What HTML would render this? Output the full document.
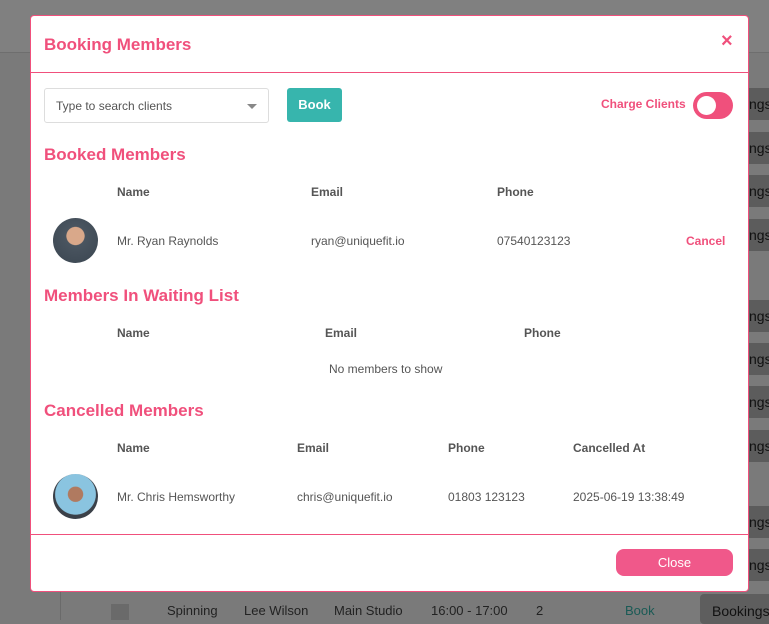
<!DOCTYPE html>
<html><head><style>
*{box-sizing:border-box;margin:0;padding:0}
body{width:769px;height:620px;background:#7a7a7a;font-family:"Liberation Sans",sans-serif;position:relative;overflow:hidden;color:#555}
.topbar{position:absolute;left:0;top:0;width:769px;height:53px;background:#808080;border-bottom:1px solid #6e6e6e}
.bgbtn{position:absolute;left:749px;width:30px;height:32px;background:#5c5c5c;color:#111;font-size:14px;line-height:32px;padding-left:0}
.bgrow{position:absolute;top:603px;font-size:13px;color:#222}
.modal{position:absolute;left:30px;top:15px;width:719px;height:577px;background:#fff;border:1px solid #f0507c;border-radius:4px}
.abs{position:absolute}
h2{position:absolute;font-size:17px;font-weight:bold;color:#f0507c}
.th{position:absolute;font-size:12px;font-weight:bold;color:#555}
.td{position:absolute;font-size:12px;color:#555}
.av{position:absolute;width:45px;height:45px;border-radius:50%}
</style></head><body>
<div class="topbar"></div>
<div class="bgbtn" style="top:88px">ngs</div>
<div class="bgbtn" style="top:132px">ngs</div>
<div class="bgbtn" style="top:175px">ngs</div>
<div class="bgbtn" style="top:219px">ngs</div>
<div class="bgbtn" style="top:300px">ngs</div>
<div class="bgbtn" style="top:343px">ngs</div>
<div class="bgbtn" style="top:386px">ngs</div>
<div class="bgbtn" style="top:430px">ngs</div>
<div class="bgbtn" style="top:506px">ngs</div>
<div class="bgbtn" style="top:549px">ngs</div>
<div class="abs" style="left:60px;top:592px;width:1px;height:28px;background:#6a6a6a"></div>
<div class="abs" style="left:111px;top:604px;width:18px;height:16px;background:#6a6a6a"></div>
<div class="bgrow" style="left:167px">Spinning</div>
<div class="bgrow" style="left:244px">Lee Wilson</div>
<div class="bgrow" style="left:334px">Main Studio</div>
<div class="bgrow" style="left:431px">16:00 - 17:00</div>
<div class="bgrow" style="left:536px">2</div>
<div class="bgrow" style="left:625px;color:#1a5a55">Book</div>
<div class="abs" style="left:700px;top:594px;width:80px;height:30px;background:#5e5e5e;border-radius:4px;color:#111;font-size:14px;padding:9px 0 0 12px">Bookings</div>

<div class="modal">
 <div class="abs" style="left:13px;top:19px;font-size:17px;font-weight:bold;color:#f0507c">Booking Members</div>
 <div class="abs" style="left:690px;top:14px;font-size:20px;font-weight:bold;color:#f0507c">×</div>
 <div class="abs" style="left:0;top:56px;width:717px;height:1px;background:#f0507c"></div>

 <div class="abs" style="left:13px;top:72px;width:225px;height:35px;border:1px solid #ddd;border-radius:3px;font-size:12px;color:#555;padding:10px 0 0 11px">Type to search clients
  <div class="abs" style="left:202px;top:15px;width:0;height:0;border-left:5px solid transparent;border-right:5px solid transparent;border-top:5px solid #888"></div></div>
 <div class="abs" style="left:256px;top:72px;width:55px;height:34px;background:#37b5ad;border-radius:3px;color:#fff;font-size:13px;font-weight:bold;text-align:center;line-height:34px">Book</div>
 <div class="abs" style="left:570px;top:81px;font-size:12px;font-weight:bold;color:#f0507c">Charge Clients</div>
 <div class="abs" style="left:662px;top:76px;width:40px;height:27px;background:#f0507c;border-radius:14px"><div class="abs" style="left:4px;top:4px;width:19px;height:19px;border-radius:50%;background:#fff"></div></div>

 <h2 style="left:13px;top:129px">Booked Members</h2>
 <div class="th" style="left:86px;top:169px">Name</div>
 <div class="th" style="left:280px;top:169px">Email</div>
 <div class="th" style="left:466px;top:169px">Phone</div>
 <div class="av" style="left:22px;top:202px;background:radial-gradient(circle at 50% 40%,#d9a88a 0 25%,#4a5560 27%,#3a4550 100%)"></div>
 <div class="td" style="left:86px;top:218px">Mr. Ryan Raynolds</div>
 <div class="td" style="left:280px;top:218px">ryan@uniquefit.io</div>
 <div class="td" style="left:466px;top:218px">07540123123</div>
 <div class="td" style="left:655px;top:218px;color:#f0507c;font-weight:bold">Cancel</div>

 <h2 style="left:13px;top:270px">Members In Waiting List</h2>
 <div class="th" style="left:86px;top:310px">Name</div>
 <div class="th" style="left:294px;top:310px">Email</div>
 <div class="th" style="left:493px;top:310px">Phone</div>
 <div class="td" style="left:298px;top:346px">No members to show</div>

 <h2 style="left:13px;top:385px">Cancelled Members</h2>
 <div class="th" style="left:86px;top:425px">Name</div>
 <div class="th" style="left:266px;top:425px">Email</div>
 <div class="th" style="left:417px;top:425px">Phone</div>
 <div class="th" style="left:542px;top:425px">Cancelled At</div>
 <div class="av" style="left:22px;top:458px;background:radial-gradient(circle at 50% 45%,#b07a60 0 22%,#8ac4e0 24%,#8ac4e0 60%,#3a4048 62%)"></div>
 <div class="td" style="left:86px;top:474px">Mr. Chris Hemsworthy</div>
 <div class="td" style="left:266px;top:474px">chris@uniquefit.io</div>
 <div class="td" style="left:417px;top:474px">01803 123123</div>
 <div class="td" style="left:542px;top:474px">2025-06-19 13:38:49</div>

 <div class="abs" style="left:0;top:518px;width:717px;height:1px;background:#f0507c"></div>
 <div class="abs" style="left:585px;top:533px;width:117px;height:27px;background:#f0588a;border-radius:8px;color:#fff;font-size:13px;text-align:center;line-height:27px">Close</div>
</div>
</body></html>
